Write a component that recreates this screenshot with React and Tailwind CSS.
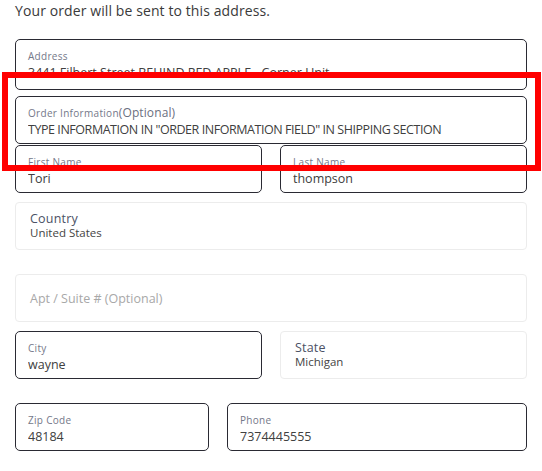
const FONT = "font-['Open_Sans',_'Noto_Sans',_sans-serif]"

function Field({ label, value, extra, className = '', valueClass = 'tracking-[0px]' }) {
  return (
    <div className={`h-[48px] rounded-[5px] border border-[#2a2a33] bg-white px-[12px] pt-[10px] ${className}`}>
      <div className="text-[10px] leading-[12px] tracking-[0.3px] text-[#747889]">
        {label}
        {extra && <span className="text-[12px] tracking-[0.1px] text-[#6b6f80]">{extra}</span>}
      </div>
      <div className={`mt-[3px] truncate text-[12.5px] leading-[16px] text-[#404040] ${valueClass}`}>{value}</div>
    </div>
  )
}

function LightField({ label, value, className = '' }) {
  return (
    <div className={`h-[48px] rounded-[4px] border border-[#ececec] bg-white px-[14px] pt-[9px] ${className}`}>
      <div className="text-[12.5px] leading-[14px] tracking-[0.2px] text-[#4b5165]">{label}</div>
      <div className="text-[11.5px] leading-[13px] text-[#444]">{value}</div>
    </div>
  )
}

export default function App() {
  return (
    <div className={`relative h-[471px] w-[542px] overflow-hidden bg-white ${FONT}`}>
      <div className="w-[527px] pl-[15px]">
        <p className="pt-[1px] text-[14px] leading-[20px] tracking-[0.1px] text-[#3a3a3a]">
          Your order will be sent to this address.
        </p>

        <div className="mt-[18px] h-[51px] overflow-hidden rounded-[5px] border border-[#2a2a33] px-[12px] pt-[10px]">
          <div className="text-[10px] leading-[12px] tracking-[0.3px] text-[#747889]">Address</div>
          <div className="mt-[3px] truncate text-[12.5px] leading-[16px] text-[#404040]">
            3441 Filbert Street BEHIND RED APPLE - Corner Unit
          </div>
        </div>

        <Field
          className="mt-[6px]"
          label="Order Information"
          extra="(Optional)"
          valueClass="tracking-[-0.45px]"
          value={'TYPE INFORMATION IN "ORDER INFORMATION FIELD" IN SHIPPING SECTION'}
        />

        <div className="mt-[1px] flex gap-[18px]">
          <Field className="w-[247px]" label="First Name" value="Tori" />
          <Field className="flex-1" label="Last Name" value="thompson" />
        </div>

        <LightField className="mt-[9px]" label="Country" value="United States" />

        <div className="mt-[24px] flex h-[48px] items-center rounded-[4px] border border-[#ececec] px-[14px]">
          <span className="pt-[3px] text-[12.5px] text-[#a8a8a8]">Apt / Suite # (Optional)</span>
        </div>

        <div className="mt-[9px] flex gap-[18px]">
          <Field className="w-[247px]" label="City" value="wayne" />
          <LightField className="flex-1" label="State" value="Michigan" />
        </div>

        <div className="mt-[24px] flex gap-[18px]">
          <Field className="w-[194px]" label="Zip Code" value="48184" />
          <Field className="flex-1" label="Phone" value="7374445555" />
        </div>
      </div>

      <div className="absolute left-[2px] top-[72px] h-[99px] w-[539px] border-[6px] border-[#ff0000]" />
    </div>
  )
}
